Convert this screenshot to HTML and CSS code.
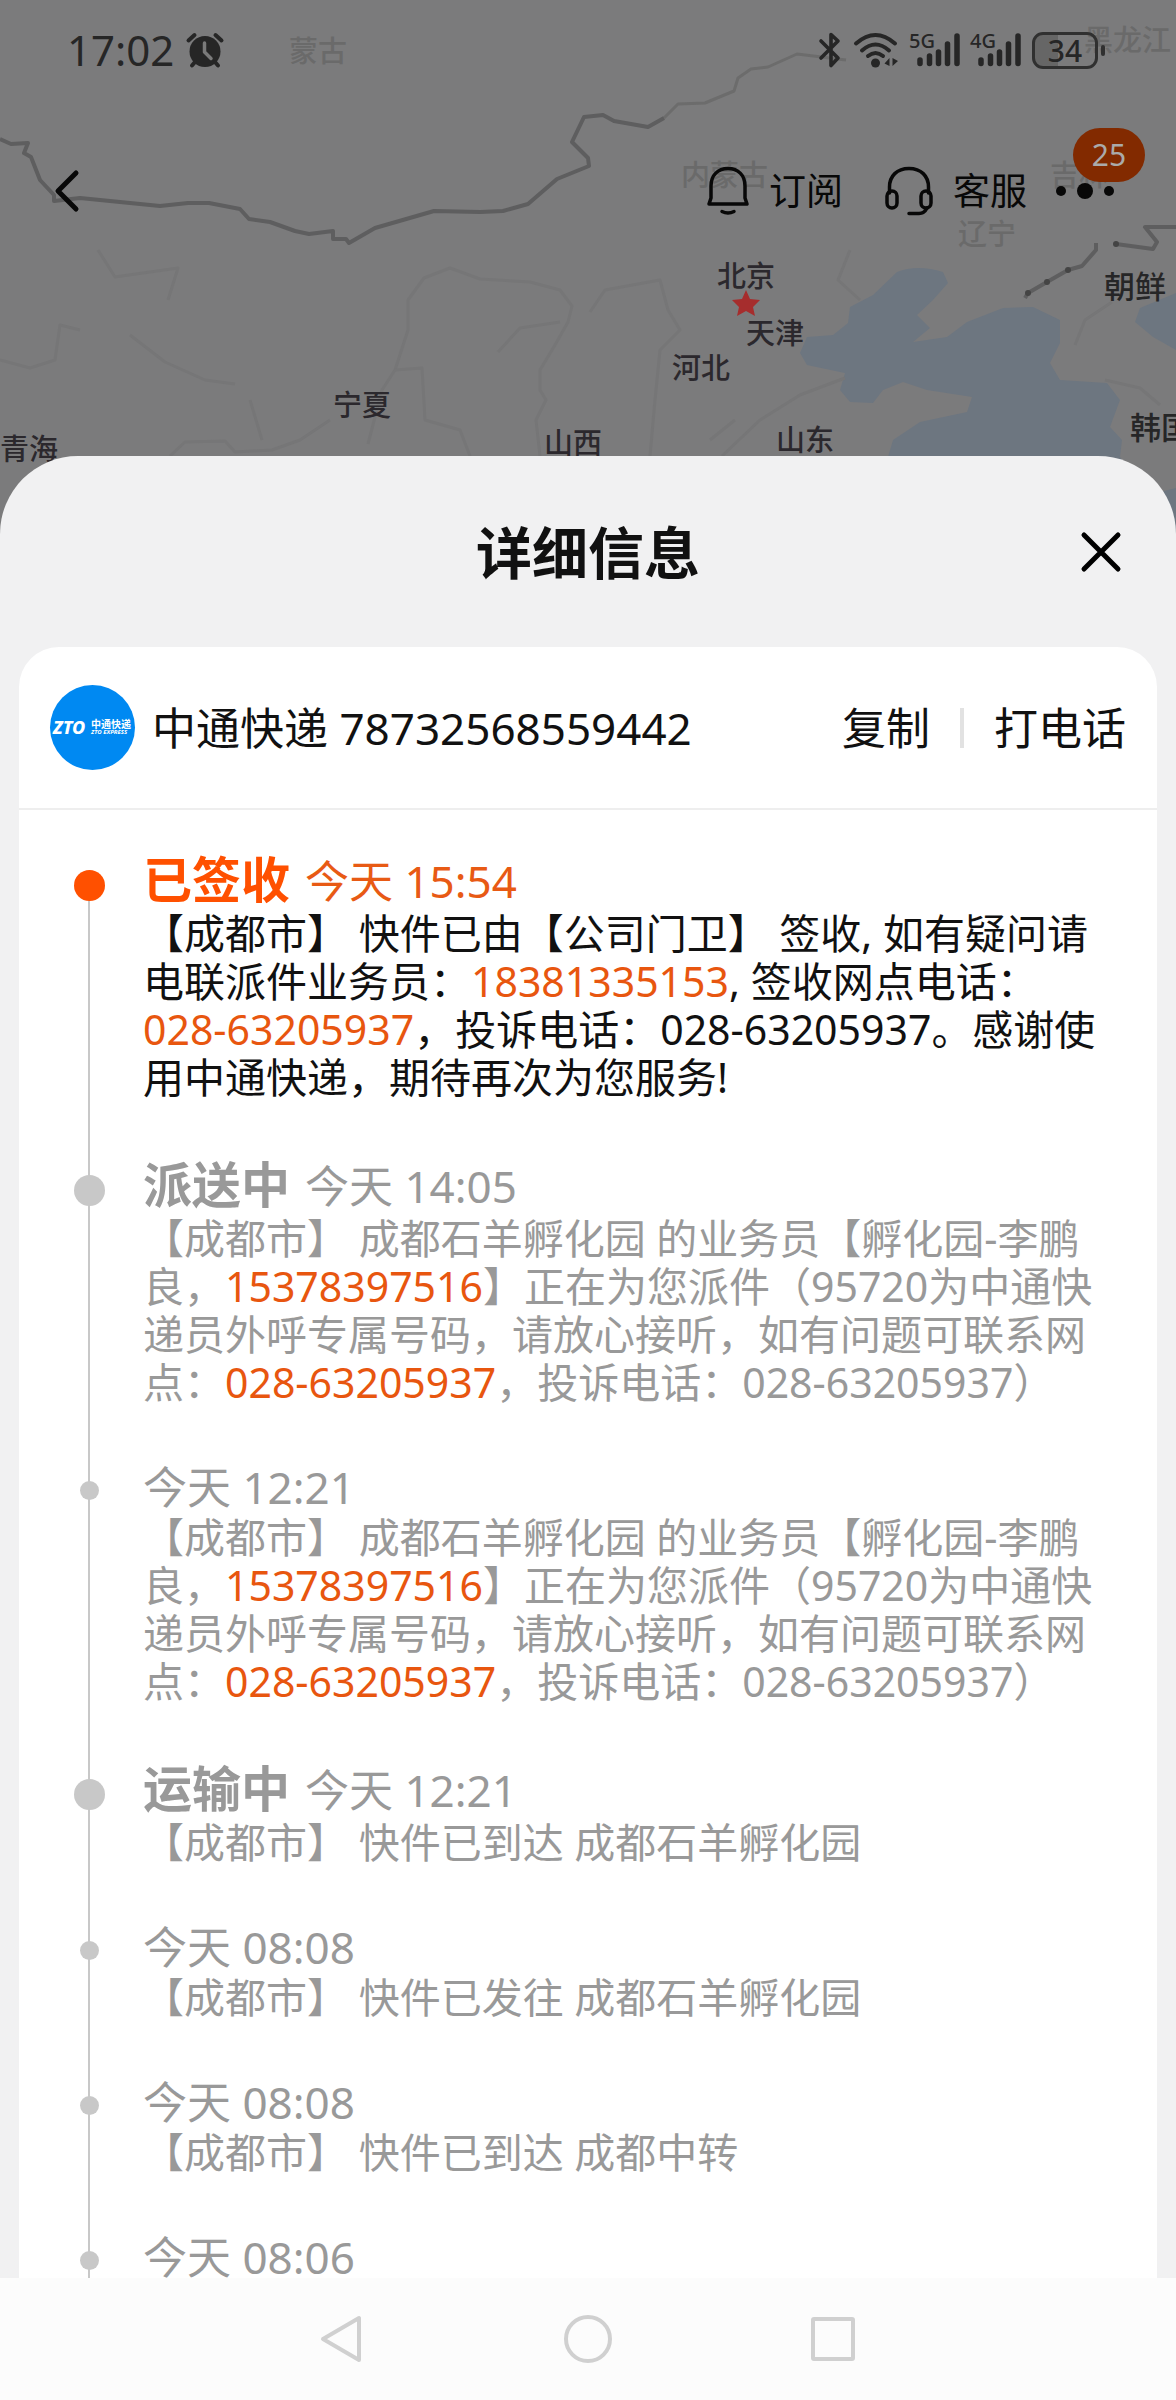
FILE: index.html
```html
<!DOCTYPE html>
<html lang="zh-CN">
<head>
<meta charset="utf-8">
<meta name="viewport" content="width=device-width, initial-scale=1">
<title>详细信息</title>
<link rel="stylesheet" href="styles.css">
</head>
<body>
<div class="screen">
  <svg class="map" viewBox="0 0 1176 600" aria-hidden="true">
    <g class="sea">
      <path d="M897 272Q917 264 943 272L948 283L933 300L917 315L930 328L913 342L947 337L967 322L1003 308L1033 307L1060 320L1060 343L1050 363L1060 380L1107 383L1120 400L1110 427L1122 440L1120 457L1134 476L1160 492L1176 488V600H888V457L893 440L920 422L967 412L972 397L927 390L903 382L883 390L873 403L850 402L840 390L845 373L807 365L800 353L807 337L833 335L848 323L850 307L873 295Z"/>
      <path d="M1176 293L1140 308L1135 322L1153 337L1176 350Z"/>
    </g>
    <g class="river">
      <path d="M368 444L382 390L395 370L408 330L408 300L424 278L450 268L480 279L530 282L560 290L572 306L568 322L555 345L540 370L540 390L546 400L536 420L540 456"/>
      <path d="M170 456L185 442L225 441L235 452L272 450L300 440L330 420"/>
      <path d="M0 360L30 368L55 360L60 325L80 330M98 250L115 277L178 268L168 300M130 335L165 362L205 380L235 384M250 400L262 440"/>
      <path d="M395 370L422 368L425 420L460 430L470 456M498 352L520 328L560 322"/>
      <path d="M590 312L605 290L660 280L668 310L680 330L660 350L655 400L650 456M722 456L760 420L800 395L845 378M850 250L838 280L860 300M735 420L710 440"/>
      <path d="M1112 302L1085 320L1075 345M1105 380L1140 388L1160 405"/>
    </g>
    <path class="frontier frontier-soft" d="M664 118L678 104L705 103L734 91L738 78L751 69L768 67L797 54L846 60"/>
    <path class="frontier" d="M0 139L11 144L28 143L24 153L31 157L40 180L54 195V201L80 198L160 206L188 203H209L240 209L249 219L270 222L295 231L309 234L333 231V239H346L349 243L375 228L434 211L480 212L503 211L528 204L557 179L589 166L588 158L572 142L584 117L603 115L614 121L648 127L664 118"/>
    <path class="frontier" d="M1025 298L1028 293L1047 282L1068 270L1082 266L1096 250V243M1116 244L1153 249L1157 242L1145 227H1176"/>
    <g class="knot"><circle cx="1028" cy="293" r="3"/><circle cx="1047" cy="282" r="3"/><circle cx="1068" cy="270" r="3"/><circle cx="1116" cy="244" r="3"/></g>
    <g class="label label-faint">
      <text x="289" y="62">蒙古</text><text x="1084" y="51">黑龙江</text><text x="681" y="186">内蒙古</text><text x="1050" y="186">吉林</text><text x="958" y="245">辽宁</text>
    </g>
    <g class="label">
      <text x="333" y="416">宁夏</text><text x="0" y="460">青海</text><text x="544" y="454">山西</text><text x="717" y="287">北京</text><text x="746" y="344">天津</text><text x="672" y="379">河北</text><text x="776" y="451">山东</text>
    </g>
    <g class="label label-country"><text x="1104" y="298">朝鲜</text><text x="1130" y="439">韩国</text></g>
    <path class="capital" d="M746 290L750 299L760 300L753 307L755 316L746 311L737 316L739 307L732 300L742 299Z"/>
  </svg>

  <header class="top">
    <div class="status">
      <div class="status-side">
        <span class="clock">17:02</span>
        <svg class="glyph" width="38" height="36" viewBox="0 0 38 36" aria-label="闹钟">
          <circle cx="19" cy="19.500" r="15.500" fill="currentColor"/>
          <path d="M2.500 8.500L8.500 3M35.500 8.500L29.500 3M9 30L6 33.500M29 30L32 33.500" fill="none" stroke="currentColor" stroke-width="4" stroke-linecap="round"/>
          <path d="M18.500 11V20L25 26.500" fill="none" stroke="#7a7a7a" stroke-width="3.500" stroke-linecap="round" stroke-linejoin="round"/>
        </svg>
      </div>
      <div class="status-side status-icons">
        <svg class="glyph" width="24" height="36" viewBox="0 0 24 36" aria-label="蓝牙">
          <path d="M3 9L20 26L13 33.500V2.500L20 9L3 26" fill="none" stroke="currentColor" stroke-width="3.600" stroke-linecap="round" stroke-linejoin="round"/>
        </svg>
        <svg class="glyph" width="46" height="36" viewBox="0 0 46 36" aria-label="无线网络">
          <g fill="none" stroke="currentColor" stroke-width="4" stroke-linecap="round"><path d="M3 11.500Q22.500-5.500 42 11.500"/><path d="M9 18.500Q22.500 6.500 36 18.500"/><path d="M15 24Q22.500 18 30 24"/></g>
          <circle cx="22.500" cy="31" r="4.500" fill="currentColor"/>
          <path d="M36.500 26V34L31.500 31.500ZM39.500 26V34L45 29Z" fill="currentColor"/>
        </svg>
        <svg class="glyph" width="50" height="36" viewBox="0 0 50 36" aria-label="5G 信号">
          <text class="net" x="-1" y="16">5G</text>
          <path d="M10 28V31.500M19.500 24V31.500M28.500 20V31.500M37.500 12V31.500M47 4V31.500" stroke="currentColor" stroke-width="5.500" stroke-linecap="round"/>
        </svg>
        <svg class="glyph" width="50" height="36" viewBox="0 0 50 36" aria-label="4G 信号">
          <text class="net" x="-1" y="16">4G</text>
          <path d="M10 28V31.500M19.500 24V31.500M28.500 20V31.500M37.500 12V31.500M47 4V31.500" stroke="currentColor" stroke-width="5.500" stroke-linecap="round"/>
        </svg>
        <span class="battery">34</span>
      </div>
    </div>

    <nav class="toolbar">
      <button class="tool" type="button" aria-label="返回">
        <svg width="26" height="42" viewBox="0 0 26 42"><path d="M22 3L4 21L22 39" fill="none" stroke="currentColor" stroke-width="5" stroke-linecap="round" stroke-linejoin="round"/></svg>
      </button>
      <div class="actions">
        <button class="tool" type="button">
          <svg width="42" height="50" viewBox="0 0 42 50"><g fill="none" stroke="currentColor" stroke-width="3.500" stroke-linecap="round" stroke-linejoin="round"><path d="M4 32V20C4 9 11 2.500 21 2.500S38 9 38 20V32L40 38H2Z"/><path d="M15 45.500Q21 48.500 27 45.500"/></g></svg>
          订阅
        </button>
        <button class="tool" type="button">
          <svg width="48" height="50" viewBox="0 0 48 50"><g fill="none" stroke="currentColor" stroke-width="3.500" stroke-linecap="round" stroke-linejoin="round"><path d="M4.500 27V21C4.500 10 12 2.500 24 2.500S43.500 10 43.500 21V27"/><rect x="2" y="25" width="10" height="17" rx="5"/><rect x="36" y="25" width="10" height="17" rx="5"/><path d="M42 42C40 46 38 47.500 34 47.500H24"/></g></svg>
          客服
        </button>
        <button class="tool more" type="button" aria-label="更多">
          <svg width="60" height="18" viewBox="0 0 60 18" fill="currentColor"><circle cx="6" cy="9" r="5"/><circle cx="30" cy="9" r="8"/><circle cx="54" cy="9" r="5"/></svg>
          <span class="badge">25</span>
        </button>
      </div>
    </nav>
  </header>

  <main class="sheet">
    <div class="sheet-head">
      <h1>详细信息</h1>
      <button class="close" type="button" aria-label="关闭">
        <svg width="40" height="40" viewBox="0 0 40 40"><path d="M3 3L37 37M37 3L3 37" stroke="currentColor" stroke-width="5" stroke-linecap="round"/></svg>
      </button>
    </div>

    <section class="card">
      <div class="parcel">
        <svg class="logo" width="85" height="85" viewBox="0 0 85 85" aria-label="ZTO">
          <circle cx="42.500" cy="42.500" r="42.500" fill="#0089f2"/>
          <text class="logo-zto" x="3" y="49">ZTO</text>
          <text class="logo-name" x="41" y="43">中通快递</text>
          <text class="logo-sub" x="41" y="49">ZTO EXPRESS</text>
        </svg>
        <span class="number">中通快递 78732568559442</span>
        <button class="act" type="button">复制</button>
        <span class="bar"></span>
        <button class="act" type="button">打电话</button>
      </div>

      <ol class="track">
        <li class="step step-major step-now">
          <span class="rail"><i class="dot"></i></span>
          <div class="info">
            <div class="when"><h2>已签收</h2><time>今天 15:54</time></div>
            <p>【成都市】 快件已由【公司门卫】 签收, 如有疑问请电联派件业务员：<a href="tel:18381335153">18381335153</a>, 签收网点电话：<a href="tel:02863205937">028-63205937</a>，投诉电话：<span class="plain">028-63205937</span>。感谢使用中通快递，期待再次为您服务!</p>
          </div>
        </li>
        <li class="step step-major">
          <span class="rail"><i class="dot"></i></span>
          <div class="info">
            <div class="when"><h2>派送中</h2><time>今天 14:05</time></div>
            <p>【成都市】 成都石羊孵化园 的业务员【孵化园-李鹏良，<a href="tel:15378397516">15378397516</a>】正在为您派件（95720为中通快递员外呼专属号码，请放心接听，如有问题可联系网点：<a href="tel:02863205937">028-63205937</a>，投诉电话：<span class="plain">028-63205937</span>）</p>
          </div>
        </li>
        <li class="step">
          <span class="rail"><i class="dot"></i></span>
          <div class="info">
            <div class="when"><time>今天 12:21</time></div>
            <p>【成都市】 成都石羊孵化园 的业务员【孵化园-李鹏良，<a href="tel:15378397516">15378397516</a>】正在为您派件（95720为中通快递员外呼专属号码，请放心接听，如有问题可联系网点：<a href="tel:02863205937">028-63205937</a>，投诉电话：<span class="plain">028-63205937</span>）</p>
          </div>
        </li>
        <li class="step step-major">
          <span class="rail"><i class="dot"></i></span>
          <div class="info">
            <div class="when"><h2>运输中</h2><time>今天 12:21</time></div>
            <p>【成都市】 快件已到达 成都石羊孵化园</p>
          </div>
        </li>
        <li class="step">
          <span class="rail"><i class="dot"></i></span>
          <div class="info">
            <div class="when"><time>今天 08:08</time></div>
            <p>【成都市】 快件已发往 成都石羊孵化园</p>
          </div>
        </li>
        <li class="step">
          <span class="rail"><i class="dot"></i></span>
          <div class="info">
            <div class="when"><time>今天 08:08</time></div>
            <p>【成都市】 快件已到达 成都中转</p>
          </div>
        </li>
        <li class="step">
          <span class="rail"><i class="dot"></i></span>
          <div class="info">
            <div class="when"><time>今天 08:06</time></div>
          </div>
        </li>
      </ol>
    </section>
  </main>

  <nav class="system">
    <button type="button" aria-label="返回"><svg width="48" height="48" viewBox="0 0 48 48"><path d="M40 3V45L4 24Z"/></svg></button>
    <button type="button" aria-label="主屏幕"><svg width="48" height="48" viewBox="0 0 48 48"><circle cx="24" cy="24" r="22"/></svg></button>
    <button type="button" aria-label="最近任务"><svg width="48" height="48" viewBox="0 0 48 48"><rect x="4" y="4" width="40" height="40" rx="1"/></svg></button>
  </nav>
</div>
</body>
</html>
```

FILE: styles.css
```css
* {
  box-sizing: border-box;
  margin: 0;
  padding: 0;
}

body {
  font-family: "Noto Sans", "Noto Sans CJK SC", sans-serif;
  color: #111;
  background: #7b7b7c;
  text-spacing-trim: space-all;
}

button {
  font: inherit;
  color: inherit;
  background: none;
  border: 0;
  cursor: pointer;
}

svg {
  display: block;
  flex: none;
  overflow: visible;
}

.screen {
  position: relative;
  display: flex;
  flex-direction: column;
  height: 100vh;
  overflow: hidden;
}

/* Map backdrop */
.map {
  position: absolute;
  top: 0;
  left: 0;
  width: 100%;
  height: auto;
}

.sea { fill: #6d7680; }
.river { fill: none; stroke: #767677; stroke-width: 3; stroke-linejoin: round; }
.frontier { fill: none; stroke: #5e5e5f; stroke-width: 4; stroke-linejoin: round; }
.frontier-soft { stroke: #6c6c6c; stroke-width: 3; }
.knot { fill: #444; }
.capital { fill: #a62d2d; }
.label { font-size: 29px; font-weight: 500; fill: #2b282d; }
.label-faint { fill: #6a6a6a; }
.label-country { font-size: 31px; fill: #262627; }

/* Status bar and toolbar */
.top {
  position: relative;
  margin-bottom: 174px;
}

.status {
  display: flex;
  justify-content: space-between;
  align-items: center;
  height: 100px;
  padding: 0 78px 0 67px;
  color: #262626;
}

.status-side {
  display: flex;
  align-items: center;
  gap: 12px;
}

.status-icons { gap: 11px; }

.clock { font-size: 42px; line-height: 48px; }
.net { font-size: 20px; font-weight: 500; fill: currentColor; }

.battery {
  position: relative;
  width: 66px;
  height: 37px;
  border: 3px solid #303030;
  border-radius: 11px;
  background: linear-gradient(90deg, #666 38%, transparent 38%);
  font-size: 30px;
  font-weight: 500;
  line-height: 31px;
  text-align: center;
}

.battery::after {
  content: "";
  position: absolute;
  top: 10px;
  right: -10px;
  width: 4px;
  height: 11px;
  border-radius: 2px;
  background: #303030;
}

.toolbar {
  display: flex;
  justify-content: space-between;
  align-items: center;
  height: 182px;
  padding: 0 61px 0 54px;
  color: #080808;
}

.actions { display: flex; align-items: center; }

.tool {
  display: flex;
  align-items: center;
  gap: 20px;
  font-size: 37px;
  line-height: 48px;
}

.tool + .tool { margin-left: 42px; }

.tool.more {
  position: relative;
  margin-left: 28px;
}

.badge {
  position: absolute;
  right: -30px;
  bottom: 18px;
  width: 72px;
  height: 54px;
  border-radius: 27px;
  background: #822a00;
  color: #aaa;
  font-size: 30px;
  line-height: 54px;
  text-align: center;
}

/* Sheet */
.sheet {
  position: relative;
  display: flex;
  flex-direction: column;
  flex: 1;
  min-height: 0;
  padding: 0 19px;
  border-radius: 78px 78px 0 0;
  background: #f1f1f2;
}

.sheet-head {
  display: grid;
  grid-template-columns: 1fr auto 1fr;
  align-items: center;
  height: 191px;
  padding: 0 36px;
}

.sheet-head h1 {
  grid-column: 2;
  font-size: 56px;
  font-weight: 700;
  line-height: 72px;
}

.close { justify-self: end; color: #000; }

.card {
  flex: 1;
  min-height: 0;
  overflow: hidden;
  border-radius: 40px 40px 0 0;
  background: #fff;
}

.parcel {
  display: flex;
  align-items: center;
  height: 163px;
  padding: 0 31px;
  border-bottom: 2px solid #eee;
  font-size: 44px;
  line-height: 60px;
}

.number { margin-left: 17px; margin-right: auto; }
.bar { width: 4px; height: 40px; margin: 0 30px; background: #e2e2e2; }

.logo text { fill: #fff; }
.logo-zto { font-size: 18px; font-style: italic; font-weight: 800; }
.logo-name { font-size: 10px; font-weight: 700; }
.logo-sub { font-size: 6px; font-style: italic; font-weight: 700; }

/* Timeline */
.track {
  list-style: none;
  padding: 37px 37px 0 54px;
}

.step {
  display: flex;
  gap: 38px;
  color: #999;
}

.rail {
  display: flex;
  justify-content: center;
  flex: none;
  width: 32px;
  background: linear-gradient(#c8c8c8, #c8c8c8) center / 2px 100% no-repeat;
}

.dot {
  width: 19px;
  height: 19px;
  margin-top: 24px;
  border-radius: 50%;
  background: #c8c8c8;
}

.step-major .dot {
  width: 31px;
  height: 31px;
  margin-top: 23px;
}

.step-now { color: #111; }
.step-now .rail { background-position: center 38px; }
.step-now .dot { background: #ff5000; }

.info {
  flex: 1;
  min-width: 0;
  padding-bottom: 51px;
}

.when {
  display: flex;
  align-items: baseline;
  gap: 15px;
  height: 56px;
  padding-top: 2px;
}

.step-major .when { height: 62px; }

.when h2 {
  font-size: 49px;
  font-weight: 700;
  line-height: 60px;
}

.when time { font-size: 44px; line-height: 56px; }
.step-now h2 { color: #ff5000; }
.step-now time { color: #e85a14; }

.info p { font-size: 41px; line-height: 48px; }

.info a {
  color: #e8560f;
  text-decoration: none;
  white-space: nowrap;
}

.plain { white-space: nowrap; }

/* System navigation */
.system {
  position: relative;
  display: flex;
  justify-content: center;
  align-items: center;
  gap: 197px;
  height: 122px;
  background: #fcfcfc;
}

.system svg {
  fill: none;
  stroke: #d0d0d0;
  stroke-width: 4;
  stroke-linejoin: round;
}
```
